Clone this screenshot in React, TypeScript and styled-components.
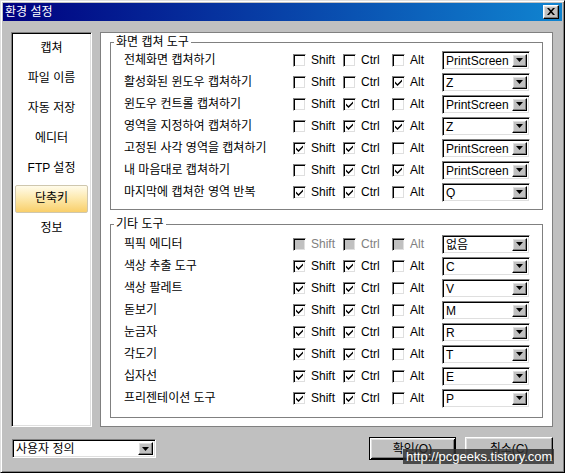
import React from "react";
import styled, { createGlobalStyle, css } from "styled-components";

const GlobalStyle = createGlobalStyle`
  html, body { margin: 0; padding: 0; background: #c0c0c0; }
  body {
    font-family: "Liberation Sans", "Noto Sans CJK KR", sans-serif;
    font-size: 12px;
    color: #000;
  }
  * { box-sizing: border-box; }
`;

const sunken = css`
  border: 1px solid;
  border-color: #808080 #fff #fff #808080;
  box-shadow: inset 1px 1px #000, inset -1px -1px #dfdfdf;
`;

const raised = css`
  border: 1px solid;
  border-color: #fff #000 #000 #fff;
  box-shadow: inset -1px -1px #808080, inset 1px 1px #dfdfdf;
`;

const Window = styled.div`
  position: relative;
  width: 565px;
  height: 473px;
  background: #c0c0c0;
  border: 1px solid;
  border-color: #dfdfdf #000 #000 #dfdfdf;
  box-shadow: inset 1px 1px #fff, inset -1px -1px #808080;
  padding: 2px;
  display: flex;
  flex-direction: column;
`;

const TitleBar = styled.div`
  height: 18px;
  flex: none;
  display: flex;
  align-items: center;
  justify-content: space-between;
  padding: 0 3px 0 2px;
  background: linear-gradient(to right, #000080, #1084d0);
  color: #fff;
  font-size: 12px;
  line-height: 14px;
`;

const CloseButton = styled.div`
  width: 16px;
  height: 14px;
  background: #c0c0c0;
  ${raised};
  display: flex;
  align-items: center;
  justify-content: center;
  padding-bottom: 1px;
`;

const Body = styled.div`
  flex: 1;
  display: flex;
  flex-direction: column;
  padding: 11px 9px 0 8px;
`;

const MainRow = styled.div`
  display: flex;
  gap: 8px;
  height: 395px;
  flex: none;
`;

const Sidebar = styled.div`
  width: 81px;
  flex: none;
  background: #fff;
  ${sunken};
  padding: 2px 3px;
  display: flex;
  flex-direction: column;
  gap: 2px;
`;

const SideItem = styled.div<{ $active?: boolean }>`
  height: 28px;
  flex: none;
  display: flex;
  align-items: center;
  justify-content: center;
  border: 1px solid transparent;
  border-radius: 2px;
  line-height: 14px;
  padding-bottom: 2px;
  white-space: nowrap;
  ${(p) =>
    p.$active &&
    css`
      border-color: #cfc7ae;
      background: linear-gradient(to bottom, #fffbea 0%, #fdeab0 45%, #f9cf6a 100%);
    `}
`;

const ContentPanel = styled.div`
  flex: 1;
  background: #fff;
  border: 1px solid #808080;
  padding: 2px 9px 0 9px;
  display: flex;
  flex-direction: column;
`;

const Group = styled.fieldset<{ $pb: number; $mt: number }>`
  margin: ${(p) => p.$mt}px 0 0 0;
  border: 1px solid #808080;
  padding: 0 0 ${(p) => p.$pb}px 0;
  min-width: 0;
`;

const Legend = styled.legend`
  padding: 0 2px;
  margin-left: 3px;
  line-height: 14px;
  font-size: 12px;
`;

const Rows = styled.div<{ $pt: number }>`
  padding: ${(p) => p.$pt}px 0 0 13px;
  display: flex;
  flex-direction: column;
`;

const Row = styled.div`
  display: grid;
  grid-template-columns: 169px 50px 49px 50px 88px;
  align-items: center;
  height: 22px;
`;

const Label = styled.div`
  white-space: nowrap;
  line-height: 14px;
  padding-bottom: 1px;
`;

const CheckOpt = styled.div<{ $disabled?: boolean }>`
  display: flex;
  align-items: center;
  gap: 5px;
  color: ${(p) => (p.$disabled ? "#808080" : "#000")};
  line-height: 14px;
`;

const Box = styled.div<{ $disabled?: boolean }>`
  width: 13px;
  height: 13px;
  flex: none;
  ${sunken};
  background: ${(p) => (p.$disabled ? "#c0c0c0" : "#fff")};
  display: flex;
  align-items: center;
  justify-content: center;
`;

const Combo = styled.div<{ $w: number }>`
  width: ${(p) => p.$w}px;
  height: 19px;
  ${sunken};
  background: #fff;
  display: flex;
  align-items: stretch;
  padding: 2px;
`;

const ComboText = styled.div`
  flex: 1;
  padding-left: 1px;
  line-height: 15px;
  white-space: nowrap;
  overflow: hidden;
`;

const DropBtn = styled.div`
  width: 15px;
  flex: none;
  background: #c0c0c0;
  ${raised};
  display: flex;
  align-items: center;
  justify-content: center;
`;

const BottomBar = styled.div`
  display: flex;
  align-items: center;
  margin-top: 10px;
  height: 23px;
  padding-left: 1px;
`;

const Spacer = styled.div`
  flex: 1;
`;

const ButtonGroup = styled.div`
  display: flex;
  gap: 9px;
`;

const PushButton = styled.div<{ $w: number; $default?: boolean }>`
  width: ${(p) => p.$w}px;
  height: 23px;
  background: #c0c0c0;
  display: flex;
  align-items: center;
  justify-content: center;
  line-height: 14px;
  ${(p) =>
    p.$default
      ? css`
          border: 1px solid #000;
          box-shadow: inset 1px 1px #fff, inset -1px -1px #000, inset 2px 2px #dfdfdf,
            inset -2px -2px #808080;
        `
      : raised};
`;

const Watermark = styled.div`
  position: absolute;
  left: 402px;
  top: 448px;
  width: 151px;
  height: 15px;
  background: rgba(48, 48, 48, 0.82);
  color: #fff;
  font-family: "Liberation Sans", sans-serif;
  font-size: 13px;
  line-height: 15px;
  padding-left: 3px;
  white-space: nowrap;
`;

const CheckMark = () => (
  <svg width="9" height="9" viewBox="0 0 9 9">
    <path d="M1 3.5 L1 5.5 L3.5 8 L8 3.5 L8 1.5 L3.5 6 Z" fill="#000" />
  </svg>
);

const DownArrow = () => (
  <svg width="7" height="4" viewBox="0 0 7 4">
    <path d="M0 0 H7 L3.5 4 Z" fill="#000" />
  </svg>
);

const CloseX = () => (
  <svg width="8" height="7" viewBox="0 0 8 7">
    <path d="M0 0 H2 L4 2.2 L6 0 H8 L5 3.5 L8 7 H6 L4 4.8 L2 7 H0 L3 3.5 Z" fill="#000" />
  </svg>
);

const Check = ({ label, checked, disabled }: { label: string; checked?: boolean; disabled?: boolean }) => (
  <CheckOpt $disabled={disabled}>
    <Box $disabled={disabled}>{checked ? <CheckMark /> : null}</Box>
    <span>{label}</span>
  </CheckOpt>
);

const ComboBox = ({ value, width }: { value: string; width: number }) => (
  <Combo $w={width}>
    <ComboText>{value}</ComboText>
    <DropBtn>
      <DownArrow />
    </DropBtn>
  </Combo>
);

type Shortcut = { name: string; s: boolean; c: boolean; a: boolean; key: string; disabled?: boolean };

const captureTools: Shortcut[] = [
  { name: "전체화면 캡쳐하기", s: false, c: false, a: false, key: "PrintScreen" },
  { name: "활성화된 윈도우 캡쳐하기", s: false, c: false, a: true, key: "Z" },
  { name: "윈도우 컨트롤 캡쳐하기", s: false, c: true, a: false, key: "PrintScreen" },
  { name: "영역을 지정하여 캡쳐하기", s: false, c: true, a: true, key: "Z" },
  { name: "고정된 사각 영역을 캡쳐하기", s: true, c: true, a: false, key: "PrintScreen" },
  { name: "내 마음대로 캡쳐하기", s: false, c: true, a: true, key: "PrintScreen" },
  { name: "마지막에 캡쳐한 영역 반복", s: true, c: true, a: false, key: "Q" },
];

const otherTools: Shortcut[] = [
  { name: "픽픽 에디터", s: false, c: false, a: false, key: "없음", disabled: true },
  { name: "색상 추출 도구", s: true, c: true, a: false, key: "C" },
  { name: "색상 팔레트", s: true, c: true, a: false, key: "V" },
  { name: "돋보기", s: true, c: true, a: false, key: "M" },
  { name: "눈금자", s: true, c: true, a: false, key: "R" },
  { name: "각도기", s: true, c: true, a: false, key: "T" },
  { name: "십자선", s: true, c: true, a: false, key: "E" },
  { name: "프리젠테이션 도구", s: true, c: true, a: false, key: "P" },
];

const menu = ["캡쳐", "파일 이름", "자동 저장", "에디터", "FTP 설정", "단축키", "정보"];

const ShortcutRow = ({ item }: { item: Shortcut }) => (
  <Row>
    <Label>{item.name}</Label>
    <Check label="Shift" checked={item.s} disabled={item.disabled} />
    <Check label="Ctrl" checked={item.c} disabled={item.disabled} />
    <Check label="Alt" checked={item.a} disabled={item.disabled} />
    <ComboBox value={item.key} width={88} />
  </Row>
);

export default function App() {
  return (
    <>
      <GlobalStyle />
      <Window>
        <TitleBar>
          <span>환경 설정</span>
          <CloseButton>
            <CloseX />
          </CloseButton>
        </TitleBar>
        <Body>
          <MainRow>
            <Sidebar>
              {menu.map((m) => (
                <SideItem key={m} $active={m === "단축키"}>
                  {m}
                </SideItem>
              ))}
            </Sidebar>
            <ContentPanel>
              <Group $pb={6} $mt={0}>
                <Legend>화면 캡쳐 도구</Legend>
                <Rows $pt={0}>
                  {captureTools.map((t) => (
                    <ShortcutRow key={t.name} item={t} />
                  ))}
                </Rows>
              </Group>
              <Group $pb={8} $mt={7}>
                <Legend>기타 도구</Legend>
                <Rows $pt={2}>
                  {otherTools.map((t) => (
                    <ShortcutRow key={t.name} item={t} />
                  ))}
                </Rows>
              </Group>
            </ContentPanel>
          </MainRow>
          <BottomBar>
            <ComboBox value="사용자 정의" width={144} />
            <Spacer />
            <ButtonGroup>
              <PushButton $w={87} $default>
                확인(O)
              </PushButton>
              <PushButton $w={88}>취소(C)</PushButton>
            </ButtonGroup>
          </BottomBar>
        </Body>
        <Watermark>http://pcgeeks.tistory.com</Watermark>
      </Window>
    </>
  );
}
